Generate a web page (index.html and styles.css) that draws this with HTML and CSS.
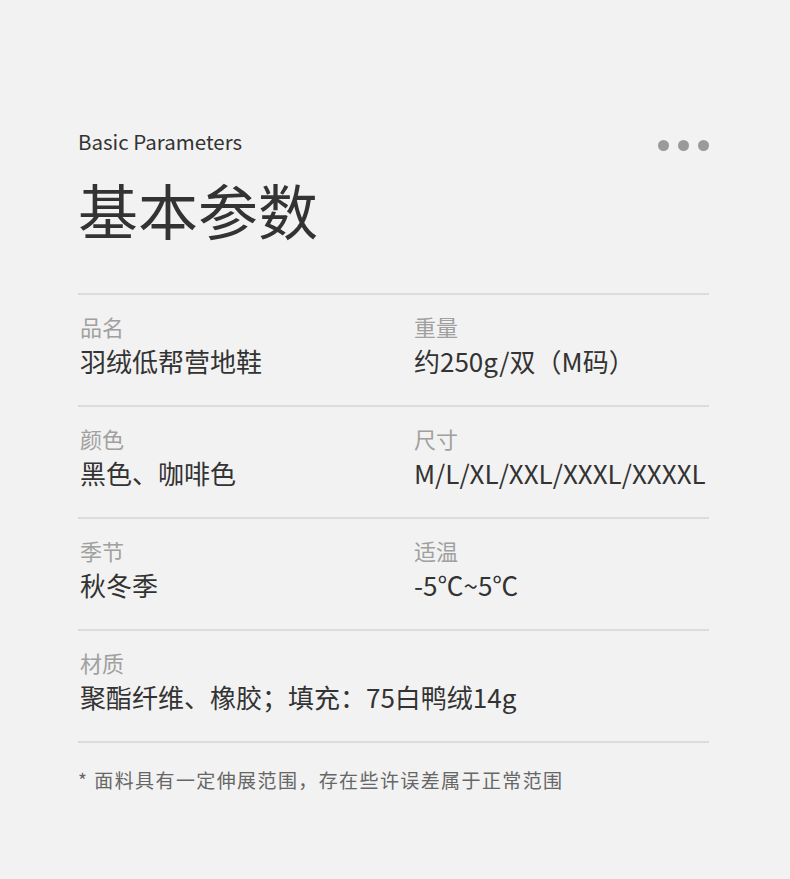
FILE: index.html
```html
<!DOCTYPE html>
<html lang="zh-CN">
<head>
    <meta charset="UTF-8">
    <meta name="viewport" content="width=device-width, initial-scale=1.0">
    <title>基本参数</title>
    <link rel="stylesheet" href="styles.css">
</head>
<body>
    <div class="container">
        <!-- Header -->
        <div class="header">
            <div class="subtitle">Basic Parameters</div>
            <div class="dots">
                <span class="dot"></span>
                <span class="dot"></span>
                <span class="dot"></span>
            </div>
        </div>
        <h1 class="title">基本参数</h1>

        <!-- Parameter rows -->
        <div class="params">
            <div class="row">
                <div class="cell">
                    <div class="label">品名</div>
                    <div class="value">羽绒低帮营地鞋</div>
                </div>
                <div class="cell">
                    <div class="label">重量</div>
                    <div class="value">约250g/双（M码）</div>
                </div>
            </div>
            <div class="row">
                <div class="cell">
                    <div class="label">颜色</div>
                    <div class="value">黑色、咖啡色</div>
                </div>
                <div class="cell">
                    <div class="label">尺寸</div>
                    <div class="value">M/L/XL/XXL/XXXL/XXXXL</div>
                </div>
            </div>
            <div class="row">
                <div class="cell">
                    <div class="label">季节</div>
                    <div class="value">秋冬季</div>
                </div>
                <div class="cell">
                    <div class="label">适温</div>
                    <div class="value">-5℃~5℃</div>
                </div>
            </div>
            <div class="row">
                <div class="cell">
                    <div class="label">材质</div>
                    <div class="value">聚酯纤维、橡胶；填充：75白鸭绒14g</div>
                </div>
            </div>
        </div>

        <p class="note"><span class="star">*</span>面料具有一定伸展范围，存在些许误差属于正常范围</p>
    </div>
</body>
</html>
```

FILE: styles.css
```css
body {
    margin: 0;
    padding: 0;
    background-color: #f2f2f2;
    font-family: "Noto Sans CJK SC", "Noto Sans", sans-serif;
    color: #333;
}
.container {
    width: 631px;
    margin-left: 78px;
    padding-top: 127px;
}
.header {
    display: flex;
    justify-content: space-between;
    align-items: center;
}
.subtitle {
    font-size: 20.5px;
    line-height: 28px;
    color: #333;
}
.dots {
    display: flex;
    gap: 9px;
    margin-top: 8px;
}
.dot {
    width: 11px;
    height: 11px;
    border-radius: 50%;
    background-color: #9a9a9a;
}
.title {
    margin: 14px 0 44px;
    font-size: 60px;
    line-height: 80px;
    font-weight: 400;
    color: #333;
}
.params {
    border-bottom: 2px solid #dcdcdc;
}
.row {
    display: grid;
    grid-template-columns: 334px 1fr;
    border-top: 2px solid #dcdcdc;
    padding: 16px 0 24px 2px;
}
.label {
    font-size: 22px;
    line-height: 30px;
    color: #a0a0a0;
}
.value {
    font-size: 26px;
    line-height: 40px;
    white-space: nowrap;
    color: #333;
}
.note {
    margin: 24px 0 0;
    font-size: 19px;
    line-height: 26px;
    letter-spacing: 1.4px;
    color: #666;
}
.star {
    margin-right: 6px;
}
```
